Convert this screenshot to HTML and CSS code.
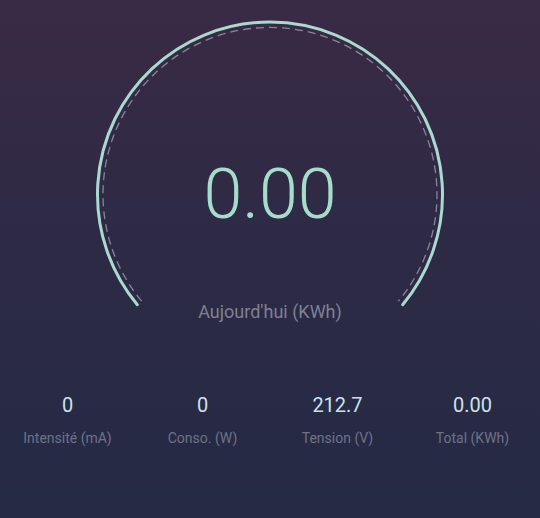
FILE: index.html
```html
<!DOCTYPE html>
<html lang="fr">
<head>
    <meta charset="UTF-8">
    <meta name="viewport" content="width=device-width, initial-scale=1.0">
    <title>Consommation</title>
<link rel="stylesheet" href="styles.css">
</head>
<body>
    <section class="gauge">
        <svg class="gauge-arc" width="360" height="320" viewBox="0 0 360 320">
            <path class="arc-dash" d="M 51.6 287.2 A 167 167 0 1 1 308.4 287.2" />
            <path class="arc-main" d="M 47.3 290.7 A 172.5 172.5 0 1 1 312.7 290.7" />
        </svg>
        <div class="readout">
            <p class="today-value">0.00</p>
            <p class="today-label">Aujourd'hui (KWh)</p>
        </div>
    </section>
    <section class="stats">
        <div class="stat"><p class="stat-value">0</p><p class="stat-label">Intensité (mA)</p></div>
        <div class="stat"><p class="stat-value">0</p><p class="stat-label">Conso. (W)</p></div>
        <div class="stat"><p class="stat-value">212.7</p><p class="stat-label">Tension (V)</p></div>
        <div class="stat"><p class="stat-value">0.00</p><p class="stat-label">Total (KWh)</p></div>
    </section>
</body>
</html>
```
FILE: styles.css
```css
html, body {
    height: 100%;
}
body {
    margin: 0;
    background: linear-gradient(180deg, #3a2a45 0%, #2e2a45 45%, #252a45 100%);
    font-family: Roboto, "Liberation Sans", sans-serif;
    overflow: hidden;
}
p {
    margin: 0;
}
.gauge {
    display: grid;
    width: 360px;
    height: 320px;
    margin: 14px auto 0;
}
.gauge-arc,
.readout {
    grid-area: 1 / 1;
}
.arc-main {
    fill: none;
    stroke: #a9d9cf;
    stroke-width: 3;
    stroke-linecap: round;
}
.arc-dash {
    fill: none;
    stroke: #8a8598;
    stroke-width: 1.3;
    stroke-dasharray: 8 5;
}
.readout {
    display: flex;
    flex-direction: column;
    align-items: center;
    padding-top: 145px;
}
.today-value {
    font-size: 70px;
    line-height: 70px;
    font-weight: 300;
    color: #a6dccb;
}
.today-label {
    margin-top: 72px;
    font-size: 18px;
    line-height: 21px;
    color: #7d8193;
}
.stats {
    display: grid;
    grid-template-columns: repeat(4, 1fr);
    margin-top: 59px;
}
.stat {
    display: flex;
    flex-direction: column;
    align-items: center;
    gap: 12px;
}
.stat-value {
    font-size: 20px;
    line-height: 24px;
    color: #c9e4ea;
}
.stat-label {
    font-size: 14px;
    line-height: 18px;
    color: #6e7286;
}
```
